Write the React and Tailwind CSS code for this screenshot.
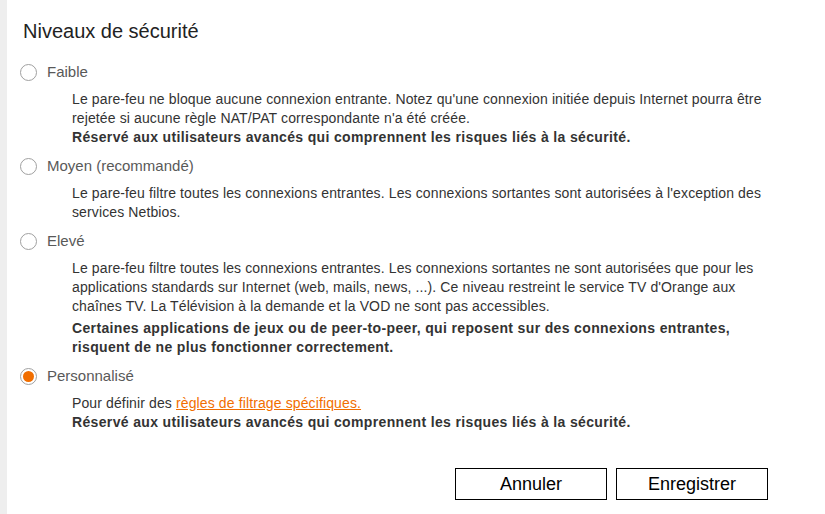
const levels = [
  {
    id: 'faible',
    label: 'Faible',
    body: [
      "Le pare-feu ne bloque aucune connexion entrante. Notez qu'une connexion initiée depuis Internet pourra être",
      "rejetée si aucune règle NAT/PAT correspondante n'a été créée.",
    ],
    warning: ['Réservé aux utilisateurs avancés qui comprennent les risques liés à la sécurité.'],
  },
  {
    id: 'moyen',
    label: 'Moyen (recommandé)',
    body: [
      "Le pare-feu filtre toutes les connexions entrantes. Les connexions sortantes sont autorisées à l'exception des",
      'services Netbios.',
    ],
  },
  {
    id: 'eleve',
    label: 'Elevé',
    body: [
      'Le pare-feu filtre toutes les connexions entrantes. Les connexions sortantes ne sont autorisées que pour les',
      "applications standards sur Internet (web, mails, news, ...). Ce niveau restreint le service TV d'Orange aux",
      'chaînes TV. La Télévision à la demande et la VOD ne sont pas accessibles.',
    ],
    warning: [
      'Certaines applications de jeux ou de peer-to-peer, qui reposent sur des connexions entrantes,',
      'risquent de ne plus fonctionner correctement.',
    ],
    warningGap: true,
  },
];

const Radio = ({ checked }) => (
  <span className="flex-shrink-0 w-[17px] h-[17px] rounded-full border border-[#a0a0a0] bg-white flex items-center justify-center">
    {checked && <span className="w-[11px] h-[11px] rounded-full bg-[#f16e00]" />}
  </span>
);

const Level = ({ label, checked, children }) => (
  <div className="mt-[8px] first:mt-0">
    <label className="flex items-center h-[22px] pl-[20px] cursor-pointer">
      <Radio checked={checked} />
      <span className="ml-[10px] text-[15px] text-[#595959]">{label}</span>
    </label>
    <div className="mt-[7px] pl-[72px] text-[14px] leading-[19px] tracking-[0.12px] text-[#333] whitespace-nowrap">
      {children}
    </div>
  </div>
);

export default function App() {
  return (
    <div className="w-[825px] h-[514px] flex bg-white" style={{ fontFamily: '"Liberation Sans", Arial, sans-serif' }}>
      <div className="w-[7px] bg-[#eeeeee] flex-shrink-0" />
      <div className="flex-1 flex flex-col">
        <h2 className="pt-[19px] pl-[16px] text-[20px] leading-[24px] text-[#222]">Niveaux de sécurité</h2>

        <div className="mt-[18px] -ml-[7px]">
          {levels.map((lvl) => (
            <Level key={lvl.id} label={lvl.label}>
              {lvl.body.map((line, i) => (
                <div key={i}>{line}</div>
              ))}
              {lvl.warning && (
                <div className={`font-bold tracking-[0.35px] ${lvl.warningGap ? 'mt-[3px]' : ''}`}>
                  {lvl.warning.map((line, i) => (
                    <div key={i}>{line}</div>
                  ))}
                </div>
              )}
            </Level>
          ))}
          <Level label="Personnalisé" checked>
            <div>
              Pour définir des{' '}
              <a href="#" className="text-[#f16e00] underline">
                règles de filtrage spécifiques.
              </a>
            </div>
            <div className="font-bold tracking-[0.35px]">
              Réservé aux utilisateurs avancés qui comprennent les risques liés à la sécurité.
            </div>
          </Level>
        </div>

        <div className="mt-[36px] flex justify-end gap-[9px] pr-[57px]">
          <button className="w-[152px] h-[32px] border border-black bg-white text-[18px] text-black">
            Annuler
          </button>
          <button className="w-[152px] h-[32px] border border-black bg-white text-[18px] text-black">
            Enregistrer
          </button>
        </div>
      </div>
    </div>
  );
}
